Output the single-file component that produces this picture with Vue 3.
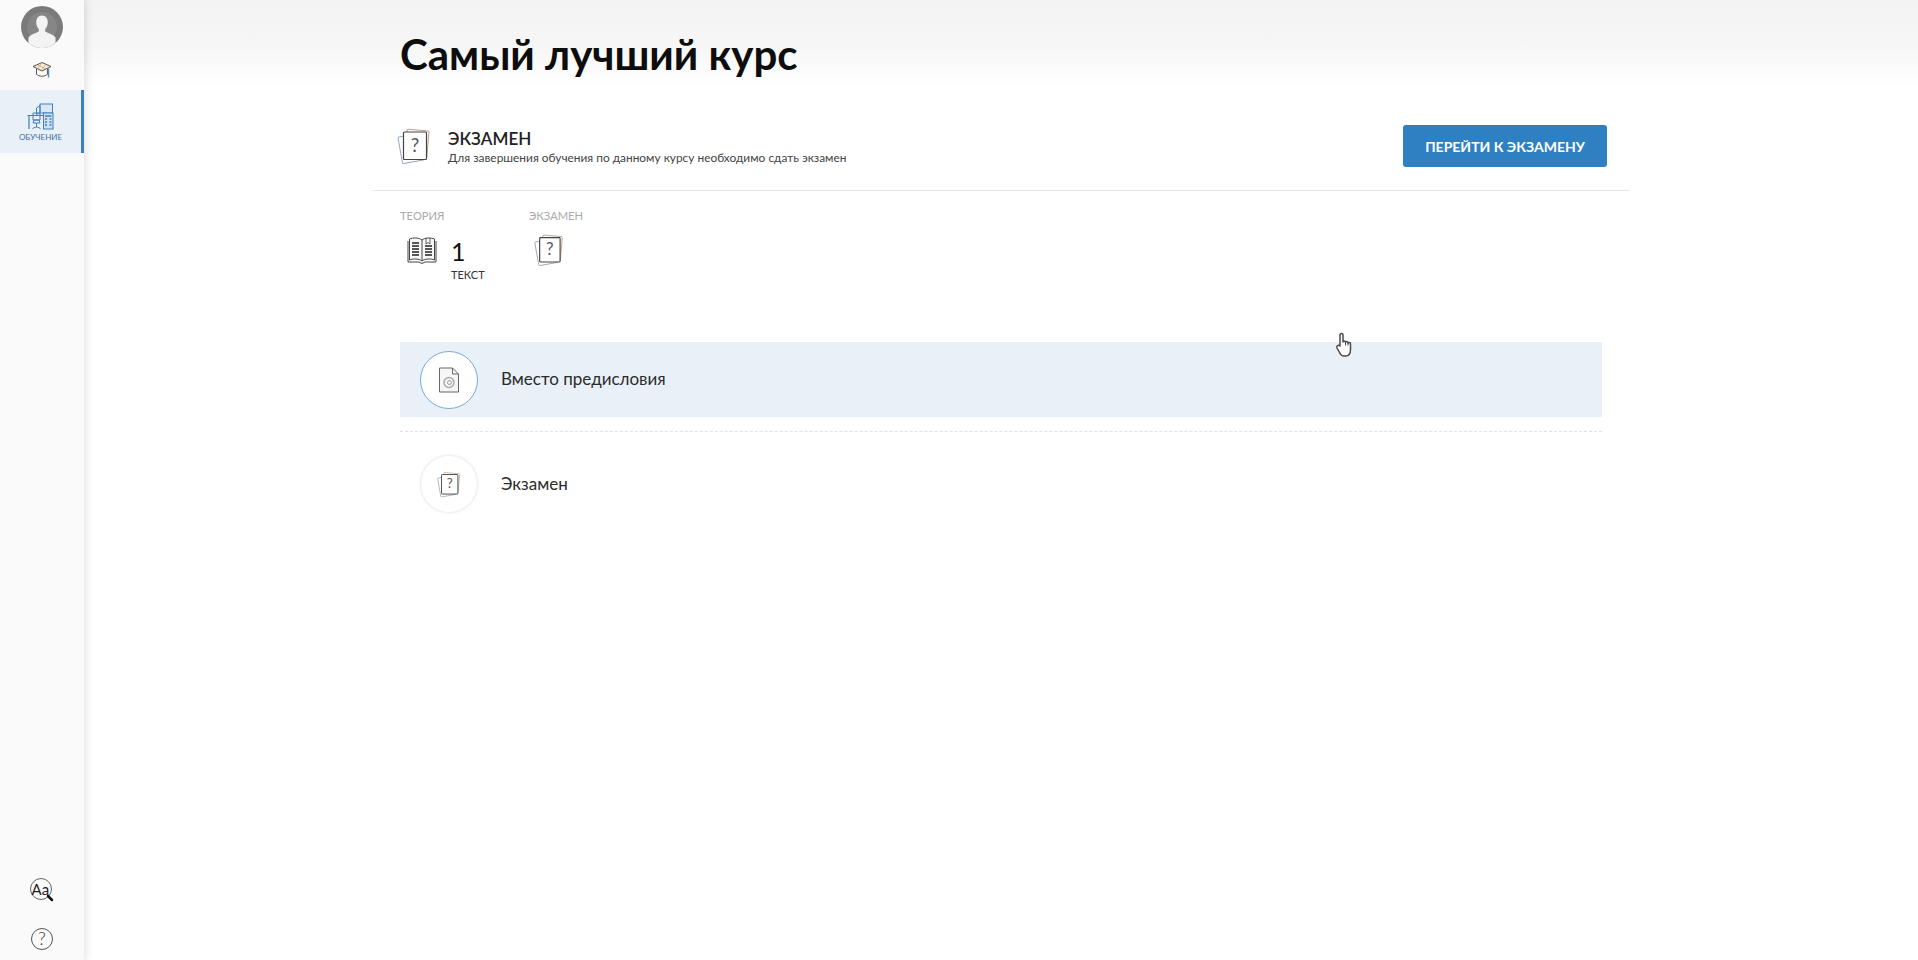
<script setup>
// Course page: sidebar, exam banner, stats and lesson list
const lessons = [
  { title: 'Вместо предисловия', icon: 'doc', active: true },
  { title: 'Экзамен', icon: 'exam', active: false }
]
</script>

<template>
  <div class="page">
    <aside class="sidebar">
      <div class="avatar">
        <svg viewBox="0 0 42 42" width="42" height="42">
          <circle cx="21" cy="21" r="21" fill="#7a7a7a" />
          <circle cx="21" cy="21" r="15" fill="#868686" />
          <clipPath id="avatar-clip"><circle cx="21" cy="21" r="21" /></clipPath>
          <path clip-path="url(#avatar-clip)" d="M21 9.500c-3.800 0-5.800 3-5.800 6.800 0 2.800 1 5.200 2.600 6.700v2.600c-2.800 1.700-7.400 2.500-10.300 6V42h27V31.600c-2.900-3.500-7.500-4.300-10.300-6V23c1.600-1.500 2.600-3.900 2.600-6.700 0-3.800-2-6.800-5.800-6.800z" fill="#f3f3f3" />
        </svg>
      </div>
      <svg class="cap" viewBox="0 0 20 20" width="20" height="20" fill="none" stroke="#555" stroke-width="1">
        <path d="M1 6.500 10 2.500l9 4-9 4.500z" fill="#f3ead9" />
        <path d="M4.500 9v5c2 3 9 3 11 0V9" />
        <path d="M6 5l8 4M10 2.500 5.500 9M14 4.500l-5 6" stroke="#c9a26a" stroke-width=".7" />
        <path d="M16.500 8.500v9" stroke="#4f8cc4" stroke-width="1.400" />
      </svg>
      <div class="nav-item">
        <svg viewBox="0 0 27 27" width="27" height="27" fill="none" stroke="#3f80bf" stroke-width="1">
          <rect x="13" y="1" width="12.500" height="9" fill="#dbe7f3" />
          <path d="M9.500 5 13 2.500v7l-3.500 2z" />
          <rect x="16.500" y="10" width="9.500" height="16" fill="#cfe0f0" />
          <path d="M18 13h6.500M18 16h2M22.500 16h2M18 19h2M22.500 19h2M18 22h2M22.500 22h2" stroke-width="1.500" />
          <path d="M.5 12.500h16M2 12.500V26" stroke-width="1.200" />
          <path d="M6 10h7v7H6zM7 17h5l1 3H6zM9.500 20v4M5.500 26c1-2.400 7-2.400 8 0" />
        </svg>
        <span>ОБУЧЕНИЕ</span>
      </div>
      <div class="sidebar-bottom">
        <svg viewBox="0 0 26 26" width="26" height="26">
          <circle cx="12" cy="12" r="10.500" fill="none" stroke="#666" />
          <text x="2.500" y="17.500" class="aa">Aa</text>
          <path d="M19 19 23 23" stroke="#111" stroke-width="2.500" stroke-linecap="round" />
        </svg>
        <svg viewBox="0 0 24 24" width="24" height="24">
          <circle cx="12" cy="12" r="10.500" fill="none" stroke="#555" />
          <text x="12" y="18" text-anchor="middle" class="qm">?</text>
        </svg>
      </div>
    </aside>

    <main class="content">
      <header class="top">
        <h1>Самый лучший курс</h1>
      </header>

      <section class="exam-banner">
        <svg class="cards" viewBox="0 0 36 38" width="36" height="38" fill="none">
          <rect x="4" y="8" width="22" height="27" rx="1" transform="rotate(-10 15 21)" stroke="#9aa7b5" />
          <rect x="10" y="3" width="22" height="27" rx="1" transform="rotate(5 21 16)" stroke="#b9a48c" />
          <rect x="7.500" y="5" width="23" height="27.500" rx="1" fill="#fff" stroke="#444" stroke-width="1.200" />
          <text x="19" y="24.500" text-anchor="middle" class="card-q">?</text>
        </svg>
        <div class="exam-text">
          <div class="exam-title">ЭКЗАМЕН</div>
          <div class="exam-desc">Для завершения обучения по данному курсу необходимо сдать экзамен</div>
        </div>
        <button class="go-btn">ПЕРЕЙТИ К ЭКЗАМЕНУ</button>
      </section>

      <section class="stats">
        <div class="stat">
          <div class="stat-label">ТЕОРИЯ</div>
          <div class="stat-body">
            <svg viewBox="0 0 30 28" width="30" height="28" fill="none" stroke="#444">
              <path d="M15 4C12 1.500 6 1.500 2.500 3v21c3.500-1.500 9.500-1.500 12.500 1 3-2.500 9-2.500 12.500-1V3C24 1.500 18 1.500 15 4zM15 4v21" fill="#f7f7f7" />
              <path d="M1 5v21h11l3 1.500 3-1.500h11V5" />
              <path d="M5 7h7M5 10h7M5 13h7M5 16h7M5 19h7M18 10h7M18 13h7M18 16h7M18 19h7" stroke="#222" stroke-width="1.300" />
              <path d="M19 2v6l2-1.500 2 1.500V2" stroke-width=".8" />
            </svg>
            <div>
              <div class="stat-num">1</div>
              <div class="stat-unit">ТЕКСТ</div>
            </div>
          </div>
        </div>
        <div class="stat">
          <div class="stat-label">ЭКЗАМЕН</div>
          <div class="stat-body stat-exam">
            <svg viewBox="0 0 36 38" width="32" height="34" fill="none">
              <rect x="4" y="8" width="22" height="27" rx="1" transform="rotate(-10 15 21)" stroke="#9aa7b5" />
              <rect x="10" y="3" width="22" height="27" rx="1" transform="rotate(5 21 16)" stroke="#b9a48c" />
              <rect x="7.500" y="5" width="23" height="27.500" rx="1" fill="#fff" stroke="#444" stroke-width="1.300" />
              <text x="19" y="24.500" text-anchor="middle" class="card-q">?</text>
            </svg>
          </div>
        </div>
      </section>

      <section class="lessons">
        <div v-for="lesson in lessons" :key="lesson.title" class="lesson" :class="{ active: lesson.active }">
          <div class="lesson-circle">
            <svg v-if="lesson.icon === 'doc'" viewBox="0 0 22 26" width="22" height="26" fill="none" stroke="#666">
              <path d="M1.500 1h13l6 6v18h-19z" fill="#f6f6f6" />
              <path d="M14.500 1v6h6" />
              <circle cx="11" cy="15.500" r="5" stroke="#aaa" stroke-width="1.500" />
              <circle cx="11.500" cy="15.500" r="2" stroke="#999" />
            </svg>
            <svg v-else viewBox="0 0 36 38" width="26" height="27" fill="none">
              <rect x="4" y="8" width="22" height="27" rx="1" transform="rotate(-10 15 21)" stroke="#9aa7b5" />
              <rect x="10" y="3" width="22" height="27" rx="1" transform="rotate(5 21 16)" stroke="#b9a48c" />
              <rect x="7.500" y="5" width="23" height="27.500" rx="1" fill="#fff" stroke="#444" stroke-width="1.300" />
              <text x="19" y="24.500" text-anchor="middle" class="card-q">?</text>
            </svg>
          </div>
          <span class="lesson-title">{{ lesson.title }}</span>
        </div>
      </section>
    </main>

    <svg class="cursor" viewBox="0 0 20 26" width="20" height="26" fill="#fff" stroke="#4a4a4a" stroke-width="1.500" stroke-linejoin="round">
      <path d="M5 14V3c0-2 3-2 3 0v7c0-1.500 2.500-1.500 2.500 0v.5c0-1.500 2.500-1.500 2.500 0v1c0-1.500 2.500-1.500 2.500 0v6c0 4-2 6.500-5 6.500H9c-2.500 0-3.500-1.500-4.500-3.500L2 16c-1-2 1.500-3.500 3-2z" />
      <path d="M10.500 10.500v3M13 11.500v2" stroke-width="1" />
    </svg>
  </div>
</template>

<style>
html, body {
  margin: 0;
  background: #fff;
}
</style>

<style scoped>
.page {
  position: relative;
  display: flex;
  height: 960px;
  font-family: Lato, "Open Sans", "Noto Sans", sans-serif;
  color: #222;
  overflow: hidden;
}
.sidebar {
  width: 84px;
  flex-shrink: 0;
  background: #fafafa;
  box-shadow: 2px 0 8px rgba(0, 0, 0, 0.12);
  display: flex;
  flex-direction: column;
  align-items: center;
  z-index: 1;
}
.avatar {
  margin-top: 6px;
  height: 42px;
}
.cap {
  margin-top: 12px;
}
.nav-item {
  margin-top: 10px;
  width: 100%;
  height: 63px;
  box-sizing: border-box;
  padding-top: 13px;
  background: #e9f0f8;
  border-right: 3px solid #3a81c1;
  display: flex;
  flex-direction: column;
  align-items: center;
  gap: 2px;
}
.nav-item span {
  font-size: 8px;
  line-height: 10px;
  color: #3d6f9f;
}
.sidebar-bottom {
  margin-top: auto;
  padding-bottom: 9px;
  display: flex;
  flex-direction: column;
  align-items: center;
  gap: 24px;
}
.aa {
  font-size: 15px;
  fill: #222;
}
.qm {
  font-size: 18px;
  font-weight: 300;
  fill: #333;
}
.card-q {
  font-size: 19px;
  font-weight: 400;
  fill: #555;
}
.content {
  flex: 1;
  min-width: 0;
}
.top {
  height: 88px;
  background: linear-gradient(#f3f3f3, #f6f6f6 50%, #fff);
  box-sizing: border-box;
  padding: 29px 0 0 400px;
  margin-left: -84px;
}
h1 {
  margin: 0;
  font-size: 42px;
  line-height: 50px;
  font-weight: 700;
  color: #0d0d0d;
}
.exam-banner {
  margin: 0 288px;
  height: 103px;
  box-sizing: border-box;
  padding: 37px 23px 0 24px;
  border-bottom: 1px solid #e8e8e8;
  display: flex;
  align-items: flex-start;
}
.cards {
  margin: 2px 0 0 0;
}
.exam-text {
  margin: 4px 0 0 16px;
  flex: 1;
}
.exam-title {
  font-size: 17px;
  line-height: 20px;
  font-weight: 600;
  color: #222;
}
.exam-desc {
  margin-top: 1px;
  font-size: 11.900px;
  line-height: 15px;
  color: #444;
}
.go-btn {
  width: 204px;
  height: 42px;
  border: none;
  border-radius: 3px;
  background: #2f80c2;
  color: #fff;
  font-family: inherit;
  font-size: 14px;
  font-weight: 700;
}
.stats {
  margin: 18px 0 0 316px;
  height: 133px;
  display: flex;
  gap: 44px;
}
.stat-label {
  font-size: 11.200px;
  line-height: 14px;
  color: #aaa;
}
.stat-body {
  margin-top: 13px;
  display: flex;
  align-items: flex-start;
  gap: 14px;
  padding-left: 7px;
}
.stat-num {
  font-size: 25px;
  line-height: 30px;
  color: #111;
}
.stat-unit {
  margin-top: 2px;
  font-size: 11px;
  line-height: 14px;
  color: #333;
}
.stat-exam {
  margin-top: 10px;
  padding-left: 4px;
}
.lessons {
  margin: 0 0 0 316px;
  width: 1202px;
}
.lesson {
  height: 75px;
  display: flex;
  align-items: center;
  padding-left: 20px;
}
.lesson.active {
  background: #e9f0f8;
}
.lesson + .lesson {
  margin-top: 14px;
  border-top: 1px dashed #e2e2e2;
  height: 104px;
}
.lesson-circle {
  width: 58px;
  height: 58px;
  box-sizing: border-box;
  border-radius: 50%;
  background: #fff;
  border: 1px solid #f0f0f0;
  box-shadow: 0 0 3px rgba(0, 0, 0, 0.08);
  display: flex;
  align-items: center;
  justify-content: center;
}
.lesson.active .lesson-circle {
  border: 1.500px solid #78aadb;
  box-shadow: none;
}
.lesson-title {
  margin: -2px 0 0 23px;
  font-size: 17px;
  color: #2b2b2b;
}
.cursor {
  position: absolute;
  left: 1335px;
  top: 332px;
  z-index: 2;
}
</style>
